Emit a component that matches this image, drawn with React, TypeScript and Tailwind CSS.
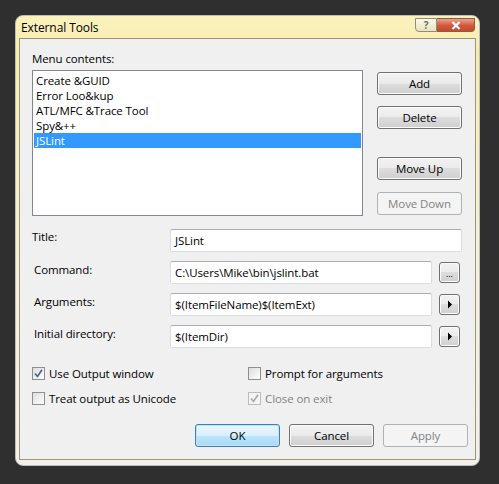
import React from "react";

const btn =
  "flex items-center justify-center h-[23px] rounded-[3px] border border-[#707070] bg-[linear-gradient(#f2f2f2_0%,#ebebeb_50%,#dddddd_50%,#cfcfcf_100%)] shadow-[inset_0_0_0_1px_#fcfcfc] text-black";
const btnOff =
  "flex items-center justify-center h-[23px] rounded-[3px] border border-[#adb2b5] bg-[#f4f4f4] text-[#838383]";
const field =
  "h-[23px] flex items-center pl-[4px] bg-white border border-[#dadde3] border-t-[#abadb3] rounded-[2px] text-black";

function Check({ on, off }: { on?: boolean; off?: boolean }) {
  return (
    <div
      className={
        "w-[13px] h-[13px] flex items-center justify-center border " +
        (off
          ? "border-[#bcbcbc] bg-[#f4f4f4]"
          : "border-[#8e8f8f] bg-[linear-gradient(135deg,#dcdcdc,#ffffff)]")
      }
    >
      {on && (
        <svg width="9" height="9" viewBox="0 0 9 9">
          <path
            d="M1 4.5 L3.5 7.5 L8 0.8"
            fill="none"
            stroke={off ? "#a8a8a8" : "#4a5f97"}
            strokeWidth="1.6"
          />
        </svg>
      )}
    </div>
  );
}

function Row({ label, value, extra, indent }: { label: string; value: string; extra?: React.ReactNode; indent?: boolean }) {
  return (
    <div className="flex h-[23px]">
      <div className={"w-[138px] leading-[16px] " + (indent ? "pl-[2px] pt-[1px]" : "")}>{label}</div>
      <div className={field + (extra ? " w-[262px]" : " w-[292px]")}>{value}</div>
      {extra && <div className="ml-[7px] mt-[1px]">{extra}</div>}
    </div>
  );
}

function SmallBtn({ children }: { children: React.ReactNode }) {
  return (
    <div className="w-[21px] h-[21px] flex items-center justify-center rounded-[3px] border border-[#707070] bg-[linear-gradient(#f2f2f2_0%,#ebebeb_50%,#dddddd_50%,#cfcfcf_100%)] shadow-[inset_0_0_0_1px_#fcfcfc]">
      {children}
    </div>
  );
}

export default function App() {
  const items = ["Create &GUID", "Error Loo&kup", "ATL/MFC &Trace Tool", "Spy&++", "JSLint"];
  return (
    <div className="w-[499px] h-[484px] bg-[#2f2f2f] pt-[15px] pl-[15px] font-['Open_Sans',sans-serif] text-[11.5px] tracking-[-0.1px] text-black">
      <div className="w-[465px] h-[451px] rounded-[8px] border border-[#bdbdbd] bg-[linear-gradient(180deg,#fbf2bd_0%,#f8edb0_8%,#f6f1dc_60%,#f2f0e8_100%)] flex flex-col">
        <div className="h-[22px] flex items-start">
          <div className="pl-[5px] pt-[3px] text-[12px]">External Tools</div>
          <div className="ml-auto mr-[4px] mt-[2px] flex">
            <div className="w-[22px] h-[14px] rounded-bl-[4px] border border-[#8c8c84] bg-[linear-gradient(#fdf9e6,#e9e2c0)] flex items-center justify-center text-[10px] font-bold text-[#6b6b6b] leading-none">
              ?
            </div>
            <div className="w-[38px] h-[14px] rounded-br-[4px] border border-l-0 border-[#8c5a4c] bg-[linear-gradient(#e9a48f,#d2583b_55%,#c44a2c)] flex items-center justify-center">
              <svg width="10" height="9" viewBox="0 0 10 9">
                <path d="M1.5 1 L8.5 8 M8.5 1 L1.5 8" stroke="#ffffff" strokeWidth="2.2" />
              </svg>
            </div>
          </div>
        </div>
        <div className="mx-[3px] h-[422px] border border-[#9c9576] bg-[#f0f0f0] pl-[12px] pt-[12px] flex flex-col">
          <div className="leading-[16px]">Menu contents:</div>
          <div className="flex mt-[3px]">
            <div className="w-[331px] h-[146px] border border-[#828790] bg-white pt-[2px] px-[1px]">
              {items.map((t, i) => (
                <div
                  key={t}
                  className={"h-[15px] leading-[15px] pl-[2px] " + (i === 4 ? "bg-[#3399ff] text-white" : "")}
                >
                  {t}
                </div>
              ))}
            </div>
            <div className="ml-[14px] w-[85px] flex flex-col">
              <div className={btn + " mt-[2px]"}>Add</div>
              <div className={btn + " mt-[11px]"}>Delete</div>
              <div className={btn + " mt-[28px]"}>Move Up</div>
              <div className={btnOff + " mt-[12px]"}>Move Down</div>
            </div>
          </div>
          <div className="mt-[13px] flex flex-col gap-[9px]">
            <Row label="Title:" value="JSLint" />
            <Row
              label="Command:"
              value="C:\Users\Mike\bin\jslint.bat"
              indent
              extra={
                <SmallBtn>
                  <span className="text-[9px] leading-none mt-[2px]">...</span>
                </SmallBtn>
              }
            />
            <Row
              label="Arguments:"
              value="$(ItemFileName)$(ItemExt)"
              indent
              extra={
                <SmallBtn>
                  <svg width="6" height="9" viewBox="0 0 6 9">
                    <path d="M1 0.5 L5 4.5 L1 8.5 Z" fill="#000" />
                  </svg>
                </SmallBtn>
              }
            />
            <Row
              label="Initial directory:"
              value="$(ItemDir)"
              indent
              extra={
                <SmallBtn>
                  <svg width="6" height="9" viewBox="0 0 6 9">
                    <path d="M1 0.5 L5 4.5 L1 8.5 Z" fill="#000" />
                  </svg>
                </SmallBtn>
              }
            />
          </div>
          <div className="mt-[19px] grid grid-cols-[216px_1fr] gap-y-[12px]">
            <div className="flex items-center gap-[4px] h-[13px]">
              <Check on />
              <span>Use Output window</span>
            </div>
            <div className="flex items-center gap-[4px] h-[13px]">
              <Check />
              <span>Prompt for arguments</span>
            </div>
            <div className="flex items-center gap-[4px] h-[13px]">
              <Check />
              <span>Treat output as Unicode</span>
            </div>
            <div className="flex items-center gap-[4px] h-[13px] text-[#838383]">
              <Check on off />
              <span>Close on exit</span>
            </div>
          </div>
          <div className="mt-[19px] flex justify-end gap-[9px] pr-[7px]">
            <div className="w-[85px] h-[23px] flex items-center justify-center rounded-[3px] border border-[#3c7fb1] bg-[linear-gradient(#eaf6fd_0%,#d9f0fc_50%,#bee6fd_50%,#a7d9f5_100%)] shadow-[inset_0_0_0_1px_#c0e4f8]">
              OK
            </div>
            <div className={btn + " w-[85px]"}>Cancel</div>
            <div className={btnOff + " w-[85px]"}>Apply</div>
          </div>
        </div>
      </div>
    </div>
  );
}
